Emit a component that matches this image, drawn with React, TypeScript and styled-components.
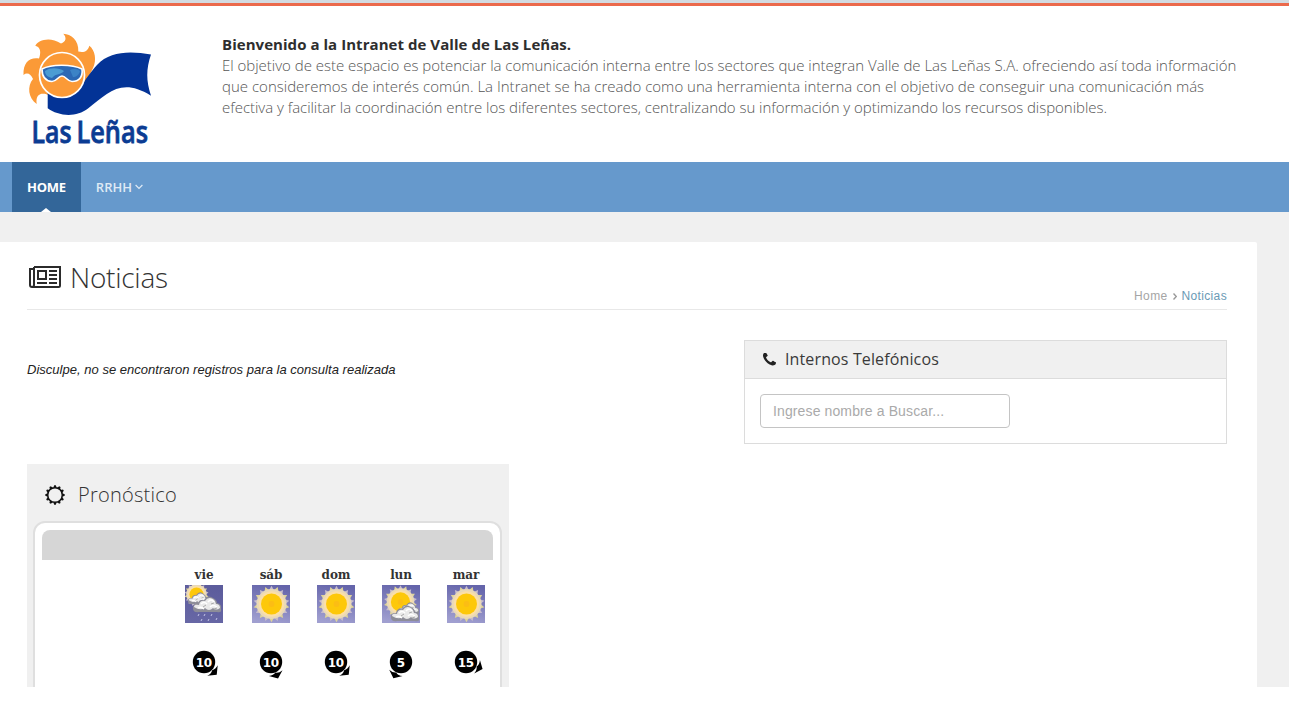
import React from 'react';
import styled, { createGlobalStyle } from 'styled-components';

const Global = createGlobalStyle`
  * { box-sizing: border-box; }
  body { margin: 0; background: #fff; overflow: hidden; font-family: "Open Sans", sans-serif; color: #333; }
  h1, h2, h3, p { margin: 0; font-weight: 300; }
`;

const Page = styled.div`
  height: 716px;
  overflow: hidden;
`;

const TopStripe = styled.div`
  height: 6px;
  background: #d3dbe1;
  border-bottom: 3px solid #eb6a4c;
`;

const Header = styled.header`
  display: flex;
  height: 156px;
  padding-left: 22px;
`;

const LogoArt = styled.svg`
  flex: none;
  width: 140px;
  height: 156px;
  overflow: visible;
  font: 600 31px "Open Sans", sans-serif;
`;

const Intro = styled.div`
  width: 1030px;
  margin-left: 60px;
  padding-top: 28px;
  font-size: 15px;
  line-height: 21px;
  font-weight: 300;
  color: #555;
  white-space: nowrap;
`;

const IntroTitle = styled.strong`
  display: block;
  font-weight: 700;
  letter-spacing: 0.05px;
  color: #2e2e2e;
`;

const IntroLine = styled.span<{ $spacing?: number }>`
  display: block;
  letter-spacing: ${(p) => p.$spacing ?? 0}px;
`;

const Nav = styled.nav`
  display: flex;
  height: 50px;
  padding-left: 12px;
  background: #6699cc;
`;

const NavItem = styled.a<{ $active?: boolean }>`
  position: relative;
  display: flex;
  align-items: center;
  gap: 3px;
  height: 50px;
  padding: 0 15px;
  font-size: 13px;
  letter-spacing: ${(p) => (p.$active ? -0.25 : 0)}px;
  font-weight: ${(p) => (p.$active ? 700 : 600)};
  color: ${(p) => (p.$active ? '#fff' : '#dfeaf5')};
  background: ${(p) => (p.$active ? '#336699' : 'transparent')};
  &::after {
    content: '';
    display: ${(p) => (p.$active ? 'block' : 'none')};
    position: absolute;
    left: 50%;
    bottom: 0;
    margin-left: -5px;
    border: 5px solid transparent;
    border-top: 0;
    border-bottom: 4px solid #fff;
  }
`;

const Body = styled.main`
  height: 475px;
  padding: 30px 32px 0 0;
  background: #f0f0f0;
  overflow: hidden;
`;

const Sheet = styled.section`
  height: 445px;
  padding: 0 30px 0 27px;
  background: #fff;
  border-top-right-radius: 2px;
  overflow: hidden;
`;

const TitleBar = styled.div`
  display: flex;
  justify-content: space-between;
  height: 68px;
  border-bottom: 1px solid #e8e8e8;
`;

const Title = styled.h1`
  display: flex;
  align-items: center;
  gap: 9px;
  height: 70px;
  padding-left: 2px;
  font-size: 28px;
  letter-spacing: -0.25px;
  color: #333;
`;

const Crumbs = styled.div`
  display: flex;
  align-items: center;
  gap: 5px;
  align-self: flex-end;
  height: 26px;
  font: 12px/26px "Liberation Sans", Arial, sans-serif;
  letter-spacing: 0.35px;
  color: #a5a5a5;
`;

const Current = styled.span`
  color: #6a9ab5;
`;

const Columns = styled.div`
  display: flex;
  justify-content: space-between;
  height: 154px;
  padding-top: 30px;
`;

const Notice = styled.p`
  padding: 21px 0 0;
  font: italic 400 13px/18px "Liberation Sans", Arial, sans-serif;
  letter-spacing: 0.022px;
  color: #222;
  white-space: nowrap;
`;

const Panel = styled.section`
  width: 483px;
  height: 104px;
  border: 1px solid #dcdcdc;
`;

const PanelHead = styled.h3`
  display: flex;
  align-items: center;
  gap: 8px;
  height: 38px;
  padding: 0 0 2px 19px;
  font-size: 16px;
  font-weight: 400;
  letter-spacing: 0.13px;
  background: #f0f0f0;
  border-bottom: 1px solid #dcdcdc;
  color: #3a3a3a;
  svg { margin: 1px 1px 0 -1px; }
`;

const Search = styled.input`
  display: block;
  width: 250px;
  height: 34px;
  margin: 15px;
  padding: 0 12px;
  font: 14px "Liberation Sans", Arial, sans-serif;
  letter-spacing: 0.12px;
  border: 1px solid #c4c4c4;
  border-radius: 4px;
  outline: none;
  &::placeholder { color: #aaa; opacity: 1; }
`;

const Forecast = styled.section`
  width: 482px;
  height: 240px;
  padding: 0 7px 0 6px;
  background: #f0f0f0;
`;

const ForecastTitle = styled.h2`
  display: flex;
  align-items: center;
  gap: 12px;
  height: 57px;
  padding: 4px 0 0 11px;
  font-size: 20px;
  letter-spacing: 0.25px;
  color: #333;
`;

const Card = styled.div`
  height: 220px;
  padding: 7px;
  background: #fff;
  border: 2px solid #dfdfdf;
  border-radius: 12px;
`;

const CardBar = styled.div`
  height: 30px;
  background: #d6d6d6;
  border-radius: 8px 8px 0 0;
`;

const Days = styled.div`
  display: grid;
  grid-template-columns: 40px repeat(4, 38px);
  column-gap: 27px;
  padding: 6px 0 0 143px;
`;

const Day = styled.div`
  display: flex;
  flex-direction: column;
  align-items: center;
  width: 38px;
`;

const DayName = styled.span`
  height: 19px;
  font: 700 12px/18px "DejaVu Serif", serif;
  letter-spacing: -0.1px;
  color: #333;
`;

const Wind = styled.svg`
  flex: none;
  width: 44px;
  height: 44px;
  margin-top: 17px;
  font: 700 12px "DejaVu Sans", sans-serif;
  letter-spacing: -0.4px;
`;

function Logo() {
  return (
    <LogoArt viewBox="22 6 140 156">
      <path
        d="M35.300 45.700 C38 40 50 36 61 43.500 C66 41.500 67 38 63.300 33.700 C71 34 79 40 78.300 51.500 C84 53 88 51 89.300 45.700 C95 50 97 60 93 68 L80 95 H48 C44 93 35 92 36.700 104 C28 98 27 86 33 79 C31 74 27 72 23.500 75 C23 62 30 57 39 58.500 C41 53 41 47 35.300 45.700Z"
        fill="#fb9a37"
      />
      <path d="M47.700 90 V108.300 C58 116 76 118 88 108.500 C108 93 121 77 151 95.700 C146 81 146 69 151 54.500 C130 51 110 51 97 65 C90 73 87 77 80 88Z" fill="#033396" />
      <circle cx="62" cy="75" r="22.500" fill="#fb9a37" stroke="#fff" strokeWidth="1.700" />
      <path d="M42 69 C51 64 72 64 82 69 C83 77 79 81.500 72 81.500 C67 81.500 66 76 62 76 C58 76 57 81.500 52 81.500 C45 81 42 76 42 69Z" fill="#2c69b5" stroke="#fff" strokeWidth="1.600" />
      <path d="M45 71 C51 67 59 68 64 71 C61 75 56 73 52 78 C48 77 45 75 45 71Z" fill="#4b9cd3" />
      <path d="M70 70 C74 68 78 69 80 71 C79 75 76 77 73 77Z" fill="#3c83c6" />
      <g fill="#0b3c93" stroke="#0b3c93" strokeWidth="0.800">
        <text x="31.500" y="143" textLength="40" lengthAdjust="spacingAndGlyphs">Las</text>
        <text x="76.500" y="143" textLength="71.500" lengthAdjust="spacingAndGlyphs">Leñas</text>
      </g>
    </LogoArt>
  );
}

function NewsIcon() {
  return (
    <svg width="32" height="22" viewBox="0 0 32 22" fill="none" stroke="#2b2b2b" strokeWidth="2">
      <path d="M5 1H31V19.500Q31 21 29.500 21H3Q1 21 1 19V3H5M5 1V19Q5 21 3 21" />
      <path d="M9 5H17V13H9ZM8 17H18M20 5H28M20 9H28M20 13H28M20 17H28" />
    </svg>
  );
}

function GearSun() {
  return (
    <svg width="22" height="22" viewBox="-11 -11 22 22" fill="#111">
      <circle r="7.300" fill="none" stroke="#111" strokeWidth="1.500" />
      {Array.from({ length: 12 }, (_, i) => (
        <path key={i} d="M-1.700 -7.300 L-.8 -9.700 H.8 L1.700 -7.300Z" transform={`rotate(${i * 30})`} />
      ))}
    </svg>
  );
}

function PhoneIcon() {
  return (
    <svg width="13" height="13" viewBox="192 192 1408 1408" fill="#222">
      <path d="M1600 1240q0 27-10 70.500t-21 68.500q-21 50-122 106-94 51-186 51-27 0-52.500-3.500t-57.500-12.500-47.500-14.500-55.500-20.500-49-18q-98-35-175-83-128-79-264.500-215.500t-215.500-264.500q-48-77-83-175-3-9-18-49t-20.500-55.500-14.500-47.500-12.500-57.500-3.500-52.500q0-92 51-186 56-101 106-122 25-11 68.500-21t70.500-10q14 0 21 3 18 6 53 76 11 19 30 54t35 63.500 31 53.500q3 4 17.500 25t21.500 35.500 7 28.500q0 20-28.500 50t-62 55-62 53-28.500 46q0 9 5 22.500t8.500 20.500 14 24 11.500 19q76 137 174 235t235 174q2 1 19 11.500t24 14 20.500 8.500 22.500 5q18 0 46-28.500t53-62 55-62 50-28.500q14 0 28.500 7t35.500 21.500 25 17.500q25 15 53.500 31t63.500 35 54 30q70 35 76 53 3 7 3 21z" />
    </svg>
  );
}

type Sky = 'rain' | 'sun' | 'cloud';

function SunDisc({ x, y, s }: { x: number; y: number; s: number }) {
  return (
    <g transform={`translate(${x} ${y}) scale(${s})`}>
      {Array.from({ length: 18 }, (_, i) => (
        <path key={i} d="M-2.500 -14 L0 -18.500 L2.500 -14Z" fill={i % 2 ? '#ddd39a' : '#c6bccb'} transform={`rotate(${i * 20})`} />
      ))}
      <circle r="15.300" fill="#e9d9b8" />
      <circle r="13" fill="#fbdfa8" />
      <circle r="10.700" fill="#fdc80a" />
      <circle r="3" fill="#fcbd14" />
    </g>
  );
}

function Cloud({ x, y, s }: { x: number; y: number; s: number }) {
  return (
    <g transform={`translate(${x} ${y}) scale(${s})`}>
      <path d="M0 13 Q-1 8 5 8 Q6 3 11 4 Q15 -2 20 2 Q24 4 24 7 Q29 8 28 13 Q29 17 24 16 H6 Q1 17 0 13Z" fill="#8d8d98" />
      <path d="M1 11 Q1 8 6 9 Q7 4 12 5 Q15 0 20 3 Q23 5 23 8 Q27 8 27 12 Q23 15 20 12 Q16 16 12 12 Q7 15 1 11Z" fill="#e9e9e9" />
      <path d="M8 8 Q11 5 14 8 M15 6 Q18 2 21 6 M17 11 Q20 8 24 11 M5 12 Q8 10 11 13" fill="none" stroke="#fff" strokeWidth="1.500" />
      <path d="M10 11 L13 9 M18 8 L21 7 M21 13 L24 12" fill="none" stroke="#aaa" />
    </g>
  );
}

function SkyIcon({ sky }: { sky: Sky }) {
  return (
    <svg width="38" height="38" viewBox="0 0 38 38">
      <defs>
        <linearGradient id={`bg-${sky}`} x1="0.6" y1="0" x2="0.4" y2="1">
          <stop offset="0" stopColor={sky === 'rain' ? '#5c5c9c' : '#6464aa'} />
          <stop offset="1" stopColor={sky === 'rain' ? '#6767a5' : '#a09fd0'} />
        </linearGradient>
      </defs>
      <rect width="38" height="38" fill={`url(#bg-${sky})`} />
      {sky === 'sun' && <SunDisc x={19.500} y={19} s={0.98} />}
      {sky === 'rain' && (
        <>
          <SunDisc x={11.500} y={9.500} s={0.66} />
          <Cloud x={3} y={7} s={0.75} />
          <Cloud x={8} y={11} s={1} />
          <path d="M14 29l-1 2M20 29l-1 2M27 29l-1 2M17 34l-1 2M24 34l-1 2M32 33l-1 2" stroke="#c4c4e6" />
        </>
      )}
      {sky === 'cloud' && (
        <>
          <SunDisc x={18.500} y={17} s={0.9} />
          <Cloud x={16} y={17} s={0.75} />
          <Cloud x={9} y={20} s={1} />
        </>
      )}
    </svg>
  );
}

const days: { name: string; sky: Sky; wind: number; angle: number }[] = [
  { name: 'vie', sky: 'rain', wind: 10, angle: 45 },
  { name: 'sáb', sky: 'sun', wind: 10, angle: 67 },
  { name: 'dom', sky: 'sun', wind: 10, angle: 45 },
  { name: 'lun', sky: 'cloud', wind: 5, angle: 115 },
  { name: 'mar', sky: 'sun', wind: 15, angle: 23 },
];

export default function App() {
  return (
    <Page>
      <Global />
      <TopStripe />
      <Header>
        <Logo />
        <Intro>
          <IntroTitle>Bienvenido a la Intranet de Valle de Las Leñas.</IntroTitle>
          <IntroLine $spacing={-0.016}>El objetivo de este espacio es potenciar la comunicación interna entre los sectores que integran Valle de Las Leñas S.A. ofreciendo así toda información</IntroLine>
          <IntroLine $spacing={0.008}>que consideremos de interés común. La Intranet se ha creado como una herramienta interna con el objetivo de conseguir una comunicación más</IntroLine>
          <IntroLine $spacing={-0.034}>efectiva y facilitar la coordinación entre los diferentes sectores, centralizando su información y optimizando los recursos disponibles.</IntroLine>
        </Intro>
      </Header>
      <Nav>
        <NavItem $active>HOME</NavItem>
        <NavItem>
          RRHH
          <svg width="8" height="6" viewBox="0 0 8 6" fill="none" stroke="#dfeaf5" strokeWidth="1.2"><path d="M.6 1L4 4.500L7.400 1" /></svg>
        </NavItem>
      </Nav>
      <Body>
        <Sheet>
          <TitleBar>
            <Title><NewsIcon />Noticias</Title>
            <Crumbs>
              <span>Home</span>
              <svg width="4" height="7" viewBox="0 0 4 7" fill="none" stroke="#999" strokeWidth="1.400"><path d="M.5 .5L3.300 3.500L.5 6.500" /></svg>
              <Current>Noticias</Current>
            </Crumbs>
          </TitleBar>
          <Columns>
            <Notice>Disculpe, no se encontraron registros para la consulta realizada</Notice>
            <Panel>
              <PanelHead><PhoneIcon />Internos Telefónicos</PanelHead>
              <Search placeholder="Ingrese nombre a Buscar..." />
            </Panel>
          </Columns>
          <Forecast>
            <ForecastTitle><GearSun />Pronóstico</ForecastTitle>
            <Card>
              <CardBar />
              <Days>
                {days.map((d) => (
                  <Day key={d.name}>
                    <DayName>{d.name}</DayName>
                    <SkyIcon sky={d.sky} />
                    <Wind viewBox="-22 -22 44 44">
                      <circle r="11.200" fill="#000" />
                      <path d="M18 0 L12 -7.400 Q13.500 -3 11.500 0 Q13.500 3 12 7.400Z" fill="#000" transform={`rotate(${d.angle})`} />
                      <text x="-0.200" y="4.500" textAnchor="middle" fill="#fff">{d.wind}</text>
                    </Wind>
                  </Day>
                ))}
              </Days>
            </Card>
          </Forecast>
        </Sheet>
      </Body>
    </Page>
  );
}
